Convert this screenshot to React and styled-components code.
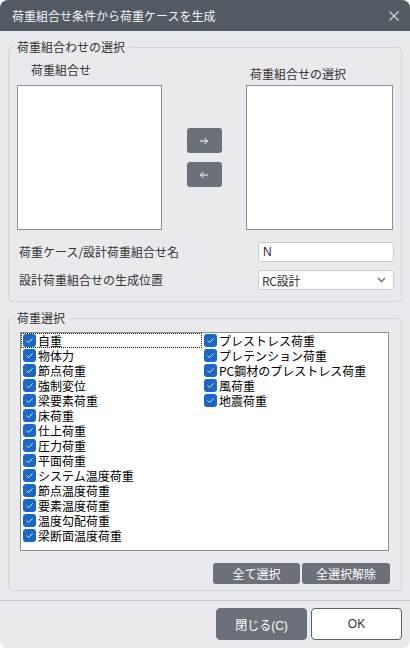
import React from "react";
import styled, { createGlobalStyle } from "styled-components";

const GlobalStyle = createGlobalStyle`
  html, body { margin: 0; padding: 0; background: #ffffff; }
  body { font-family: "Noto Sans CJK JP", "Noto Sans", sans-serif; font-size: 12px; }
  * { box-sizing: border-box; }
`;

const Window = styled.div`
  width: 410px;
  height: 648px;
  border-radius: 8px;
  overflow: hidden;
  background: #e9eaee;
  display: flex;
  flex-direction: column;
  color: #333;
`;

const TitleBar = styled.div`
  height: 31px;
  flex: none;
  background: #545a62;
  color: #f2f3f5;
  display: flex;
  align-items: center;
  justify-content: space-between;
  padding: 1px 11px 0 12px;
  font-size: 12px;
  line-height: 16px;
`;

const CloseButton = styled.button`
  border: 0;
  background: transparent;
  padding: 0;
  width: 10px;
  height: 10px;
  display: flex;
  cursor: pointer;
  margin-top: -1px;
`;

const Body = styled.div`
  flex: 1;
  padding: 0 8px;
  display: flex;
  flex-direction: column;
`;

const Group = styled.fieldset`
  margin: 8px 0 0 0;
  padding: 0;
  border: 1px solid #d3d6db;
  border-radius: 4px;
  min-width: 0;
`;

const Legend = styled.legend`
  margin-left: 5px;
  padding: 0 4px 0 3px;
  font-size: 12px;
  line-height: 16px;
  color: #333;
`;

const PickerGrid = styled.div`
  display: grid;
  grid-template-columns: 145px 1fr 147px;
  padding: 0 8px;
`;

const Column = styled.div`
  display: flex;
  flex-direction: column;
`;

const ColumnLabel = styled.div`
  height: 30px;
  padding-top: ${(p) => p.$top}px;
  padding-left: ${(p) => p.$indent}px;
  line-height: 16px;
  color: #333;
`;

const ListPane = styled.div`
  height: 145px;
  background: #ffffff;
  border: 1px solid #8c8f95;
`;

const Transfer = styled.div`
  padding-top: 30px;
  display: flex;
  flex-direction: column;
  align-items: center;
  justify-content: center;
  gap: 9px;
`;

const ArrowButton = styled.button`
  width: 35px;
  height: 25px;
  border: 0;
  border-radius: 3px;
  background: #6b7079;
  display: flex;
  align-items: center;
  justify-content: center;
  padding: 0;
  cursor: pointer;
`;

const Fields = styled.div`
  display: flex;
  flex-direction: column;
  gap: 8px;
  padding: 12px 7px 11px 10px;
`;

const FieldRow = styled.div`
  display: grid;
  grid-template-columns: 1fr 136px;
  align-items: center;
`;

const FieldLabel = styled.span`
  color: #333;
  line-height: 16px;
`;

const TextBox = styled.div`
  height: 20px;
  background: #fff;
  border: 1px solid #c9ccd2;
  border-radius: 3px;
  padding: 0 4px;
  display: flex;
  align-items: center;
  color: #2a1d55;
  font-family: "Liberation Sans", "Noto Sans CJK JP", sans-serif;
  font-size: 12px;
`;

const SelectBox = styled(TextBox)`
  justify-content: space-between;
  color: #333;
  padding: 0 7px 0 3px;
  font-family: "Noto Sans CJK JP", sans-serif;
  letter-spacing: -0.3px;
`;

const LoadList = styled.div`
  margin: 6px 12px 0 11px;
  height: 219px;
  background: #fff;
  border: 1px solid #8c8f95;
  display: grid;
  grid-auto-flow: column;
  grid-template-rows: repeat(14, 15px);
  grid-template-columns: 181px 181px;
  align-content: start;
`;

const LoadItem = styled.div`
  display: flex;
  align-items: center;
  gap: 2px;
  padding-left: 2px;
  height: 15px;
  color: #000;
  font-size: 12px;
  line-height: 15px;
  white-space: nowrap;
  outline: ${(p) => (p.$focused ? "1px dotted #222" : "none")};
  outline-offset: -1px;
`;

const Check = styled.span`
  width: 13px;
  height: 13px;
  flex: none;
  border-radius: 3px;
  background: #1a67c9;
  display: flex;
  align-items: center;
  justify-content: center;
`;

const ButtonRow = styled.div`
  display: flex;
  justify-content: flex-end;
  gap: 2px;
  padding: 12px 11px 6px 0;
`;

const SmallButton = styled.button`
  width: ${(p) => p.$w}px;
  height: 21px;
  border: 0;
  border-radius: 3px;
  background: #6b7079;
  color: #fff;
  font-family: "Noto Sans CJK JP", sans-serif;
  font-size: 12px;
  padding: 0;
  cursor: pointer;
`;

const Divider = styled.div`
  margin-top: 9px;
  height: 1px;
  background: #c3cacd;
  flex: none;
`;

const Footer = styled.div`
  display: flex;
  justify-content: flex-end;
  gap: 4px;
  padding: 7px 8px 8px 0;
`;

const DialogButton = styled.button`
  width: 91px;
  height: 32px;
  border-radius: 4px;
  font-family: "Liberation Sans", "Noto Sans CJK JP", sans-serif;
  font-size: 12px;
  padding: 0;
  cursor: pointer;
  border: 1px solid ${(p) => (p.$primary ? "#5a5f66" : "#6b7079")};
  background: ${(p) => (p.$primary ? "#ffffff" : "#6b7079")};
  color: ${(p) => (p.$primary ? "#333" : "#fff")};
`;

const CheckMark = () => (
  <svg width="9" height="9" viewBox="0 0 9 9">
    <path d="M1.5 4.6 L3.6 6.6 L7.6 2.4" fill="none" stroke="#dbe8f8" strokeWidth="1" />
  </svg>
);

const leftLoads = [
  "自重", "物体力", "節点荷重", "強制変位", "梁要素荷重", "床荷重", "仕上荷重",
  "圧力荷重", "平面荷重", "システム温度荷重", "節点温度荷重", "要素温度荷重",
  "温度勾配荷重", "梁断面温度荷重",
];
const rightLoads = ["プレストレス荷重", "プレテンション荷重", "PC鋼材のプレストレス荷重", "風荷重", "地震荷重"];

export default function App() {
  return (
    <>
      <GlobalStyle />
      <Window>
        <TitleBar>
          <span>荷重組合せ条件から荷重ケースを生成</span>
          <CloseButton aria-label="close">
            <svg width="10" height="10" viewBox="0 0 10 10">
              <path d="M0.5 0.5 L9.5 9.5 M9.5 0.5 L0.5 9.5" stroke="#d4d7db" strokeWidth="1.1" />
            </svg>
          </CloseButton>
        </TitleBar>
        <Body>
          <Group>
            <Legend>荷重組合わせの選択</Legend>
            <PickerGrid>
              <Column>
                <ColumnLabel $top={7} $indent={14}>荷重組合せ</ColumnLabel>
                <ListPane />
              </Column>
              <Transfer>
                <ArrowButton aria-label="add">
                  <svg width="10" height="8" viewBox="0 0 10 8">
                    <path d="M1 4 H8.5 M5.5 1 L8.5 4 L5.5 7" fill="none" stroke="#fff" strokeWidth="1" />
                  </svg>
                </ArrowButton>
                <ArrowButton aria-label="remove">
                  <svg width="10" height="8" viewBox="0 0 10 8">
                    <path d="M9 4 H1.5 M4.5 1 L1.5 4 L4.5 7" fill="none" stroke="#fff" strokeWidth="1" />
                  </svg>
                </ArrowButton>
              </Transfer>
              <Column>
                <ColumnLabel $top={11} $indent={4}>荷重組合せの選択</ColumnLabel>
                <ListPane />
              </Column>
            </PickerGrid>
            <Fields>
              <FieldRow>
                <FieldLabel>荷重ケース/設計荷重組合せ名</FieldLabel>
                <TextBox>N</TextBox>
              </FieldRow>
              <FieldRow>
                <FieldLabel>設計荷重組合せの生成位置</FieldLabel>
                <SelectBox>
                  <span>RC設計</span>
                  <svg width="9" height="6" viewBox="0 0 9 6">
                    <path d="M1 1 L4.5 4.5 L8 1" fill="none" stroke="#7a7d83" strokeWidth="1.6" />
                  </svg>
                </SelectBox>
              </FieldRow>
            </Fields>
          </Group>
          <Group>
            <Legend>荷重選択</Legend>
            <LoadList>
              {leftLoads.map((name, i) => (
                <LoadItem key={name} $focused={i === 0}>
                  <Check><CheckMark /></Check>
                  <span>{name}</span>
                </LoadItem>
              ))}
              {rightLoads.map((name) => (
                <LoadItem key={name}>
                  <Check><CheckMark /></Check>
                  <span>{name}</span>
                </LoadItem>
              ))}
            </LoadList>
            <ButtonRow>
              <SmallButton $w={87}>全て選択</SmallButton>
              <SmallButton $w={88}>全選択解除</SmallButton>
            </ButtonRow>
          </Group>
        </Body>
        <Divider />
        <Footer>
          <DialogButton>閉じる(C)</DialogButton>
          <DialogButton $primary>OK</DialogButton>
        </Footer>
      </Window>
    </>
  );
}
